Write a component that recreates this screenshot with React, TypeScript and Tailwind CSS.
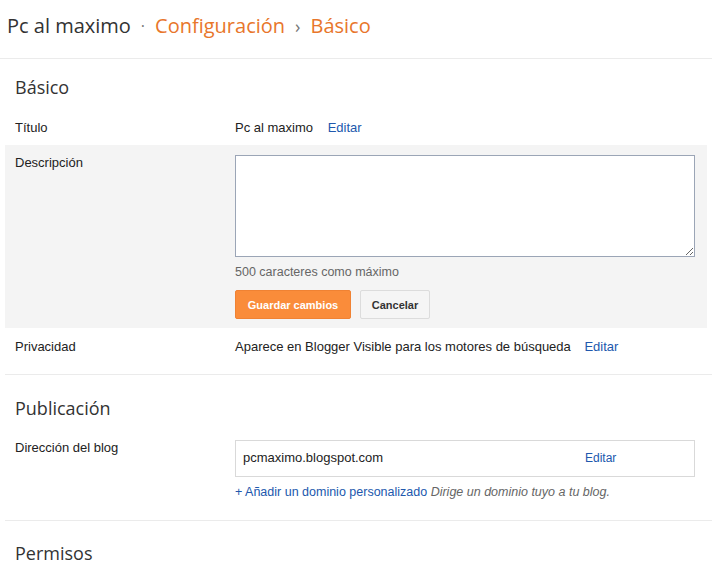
import React from "react";

const sans = { fontFamily: '"Liberation Sans", Arial, sans-serif' };
const open = { fontFamily: '"Open Sans", "Liberation Sans", sans-serif' };

function Link({ children }: { children: React.ReactNode }) {
  return <span className="text-[#2158ad] cursor-pointer">{children}</span>;
}

export default function App() {
  return (
    <div className="w-[712px] min-h-[567px] bg-white text-[#222]" style={sans}>
      <header
        className="h-[59px] border-b border-[#ebebeb] pl-[7px] flex items-center text-[20px] leading-[24px] pb-[6px]"
        style={open}
      >
        <span className="text-[#333]">Pc al maximo</span>
        <span className="text-[#777] mx-[10px] text-[16px]">·</span>
        <span className="text-[#e8762b]">Configuración</span>
        <span className="text-[#777] mx-[10px] text-[18px]">›</span>
        <span className="text-[#e8762b]">Básico</span>
      </header>

      <div className="pl-[5px]">
        {/* Básico */}
        <h2 className="pl-[10px] pt-[16px] text-[18px] leading-[24px] text-[#333] font-normal" style={open}>
          Básico
        </h2>
        <div className="flex pl-[10px] pt-[21px] pb-[9px] text-[13px] leading-[16px]">
          <div className="w-[220px] shrink-0">Título</div>
          <div>
            Pc al maximo <span className="ml-[11px]"><Link>Editar</Link></span>
          </div>
        </div>

        <div className="flex pl-[10px] pt-[10px] pb-[9px] mr-[5px] bg-[#f4f4f4] text-[13px] leading-[16px]">
          <div className="w-[220px] shrink-0">Descripción</div>
          <div className="flex flex-col">
            <textarea className="w-[460px] h-[102px] bg-white border border-[#9ba5b6] block outline-none resize" />
            <div className="mt-[7px] text-[12.5px] leading-[16px] text-[#666]">500 caracteres como máximo</div>
            <div className="flex gap-[9px] mt-[10px]">
              <button className="h-[29px] w-[116px] rounded-[2px] bg-[#fa8c3a] border border-[#f08233] text-white text-[11px] font-bold">
                Guardar cambios
              </button>
              <button className="h-[29px] w-[70px] rounded-[2px] bg-[#f5f5f5] border border-[#dcdcdc] text-[#333] text-[11px] font-bold">
                Cancelar
              </button>
            </div>
          </div>
        </div>

        <div className="flex pl-[10px] pt-[11px] pb-[19px] border-b border-[#ebebeb] text-[13px] leading-[16px]">
          <div className="w-[220px] shrink-0">Privacidad</div>
          <div>
            Aparece en Blogger Visible para los motores de búsqueda{" "}
            <span className="ml-[10px]"><Link>Editar</Link></span>
          </div>
        </div>

        {/* Publicación */}
        <h2 className="pl-[10px] pt-[21px] text-[18px] leading-[24px] text-[#333] font-normal" style={open}>
          Publicación
        </h2>
        <div className="flex pl-[10px] pt-[20px] pb-[20px] border-b border-[#ebebeb] text-[13px] leading-[16px]">
          <div className="w-[220px] shrink-0">Dirección del blog</div>
          <div className="flex flex-col">
            <div className="w-[460px] h-[37px] border border-[#d9d9d9] flex items-center pl-[7px] pb-[2px]">
              <span className="w-[342px]">pcmaximo.blogspot.com</span>
              <span className="text-[12px]"><Link>Editar</Link></span>
            </div>
            <div className="mt-[7px] text-[12.5px] leading-[16px]">
              <Link>+ Añadir un dominio personalizado</Link>{" "}
              <span className="italic text-[#666]">Dirige un dominio tuyo a tu blog.</span>
            </div>
          </div>
        </div>

        {/* Permisos */}
        <h2 className="pl-[10px] pt-[20px] text-[18px] leading-[24px] text-[#333] font-normal" style={open}>
          Permisos
        </h2>
      </div>
    </div>
  );
}
